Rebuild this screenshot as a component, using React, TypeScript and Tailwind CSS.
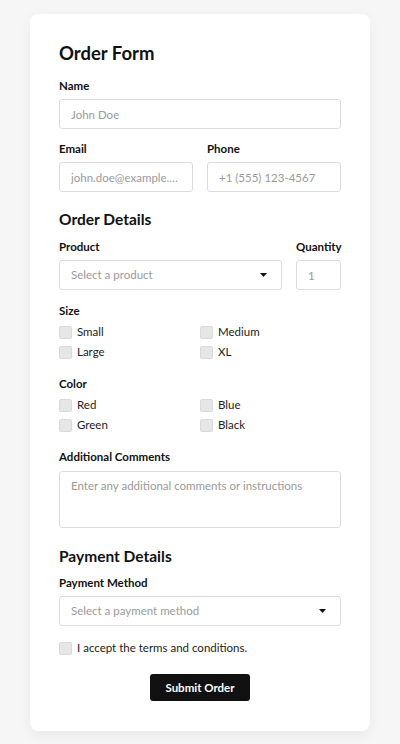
import React from "react";

const font = { fontFamily: 'Lato, "Noto Sans", sans-serif' };

function Label({ children, className = "" }: { children: React.ReactNode; className?: string }) {
    return <div className={`text-[11.5px] leading-4 font-bold text-[#111] ${className}`}>{children}</div>;
}

function TextInput({ placeholder }: { placeholder: string }) {
    return (
        <input
            placeholder={placeholder}
            className="block w-full h-[30px] px-[11px] rounded-[3px] border border-[#dcdcdc] bg-white text-[11.5px] text-[#333] placeholder:text-[#9a9a9a] text-ellipsis outline-none"
        />
    );
}

function SelectBox({ placeholder }: { placeholder: string }) {
    return (
        <div className="flex items-center justify-between h-[30px] pl-[11px] pr-[14px] rounded-[3px] border border-[#dcdcdc] bg-white">
            <span className="text-[11.5px] text-[#9a9a9a]">{placeholder}</span>
            <svg width="7" height="4" viewBox="0 0 7 4">
                <path d="M0 0h7L3.5 4z" fill="#111" />
            </svg>
        </div>
    );
}

function Check({ label }: { label: string }) {
    return (
        <label className="flex items-center h-5 gap-[5px] text-[11.5px] text-[#222]">
            <span className="w-[13px] h-[13px] rounded-[2px] bg-[#e6e6e6] border border-[#dadada]" />
            {label}
        </label>
    );
}

export default function App() {
    return (
        <div className="min-h-[744px] bg-[#f6f6f6] px-[30px] pt-[14px] pb-[14px]" style={font}>
            <div className="bg-white rounded-lg shadow-[0_4px_14px_rgba(0,0,0,0.06)] px-[29px] pt-[27px] pb-[30px]">
                <h1 className="text-[18.5px] leading-6 font-bold text-[#111]">Order Form</h1>

                <Label className="mt-[13px] mb-[5px]">Name</Label>
                <TextInput placeholder="John Doe" />

                <div className="grid grid-cols-2 gap-[14px] mt-3">
                    <div>
                        <Label className="mb-[5px]">Email</Label>
                        <TextInput placeholder="john.doe@example.com" />
                    </div>
                    <div>
                        <Label className="mb-[5px]">Phone</Label>
                        <TextInput placeholder="+1 (555) 123-4567" />
                    </div>
                </div>

                <h2 className="mt-4 text-[15.5px] leading-[22px] font-bold text-[#111]">Order Details</h2>

                <div className="flex gap-[14px] mt-[9px]">
                    <div className="flex-1">
                        <Label className="mb-[5px]">Product</Label>
                        <SelectBox placeholder="Select a product" />
                    </div>
                    <div className="w-[45px]">
                        <Label className="mb-[5px]">Quantity</Label>
                        <input
                            placeholder="1"
                            className="block w-full h-[30px] px-[11px] rounded-[3px] border border-[#dcdcdc] text-[11.5px] placeholder:text-[#9a9a9a] outline-none"
                        />
                    </div>
                </div>

                <Label className="mt-[13px]">Size</Label>
                <div className="grid grid-cols-2 mt-[3px]">
                    <Check label="Small" />
                    <Check label="Medium" />
                    <Check label="Large" />
                    <Check label="XL" />
                </div>

                <Label className="mt-[14px]">Color</Label>
                <div className="grid grid-cols-2 mt-[3px]">
                    <Check label="Red" />
                    <Check label="Blue" />
                    <Check label="Green" />
                    <Check label="Black" />
                </div>

                <Label className="mt-[14px] mb-[6px]">Additional Comments</Label>
                <textarea
                    placeholder="Enter any additional comments or instructions"
                    className="block w-full h-[57px] px-[11px] pt-[5px] pb-2 rounded-[3px] border border-[#dcdcdc] text-[11.5px] placeholder:text-[#9a9a9a] resize-none outline-none"
                />

                <h2 className="mt-[17px] text-[15.5px] leading-[22px] font-bold text-[#111]">Payment Details</h2>

                <Label className="mt-2 mb-[5px]">Payment Method</Label>
                <SelectBox placeholder="Select a payment method" />

                <div className="mt-3">
                    <Check label="I accept the terms and conditions." />
                </div>

                <div className="flex justify-center mt-4">
                    <button className="w-[100px] h-[27px] rounded-[3px] bg-[#111] text-white text-[11.5px] font-bold">
                        Submit Order
                    </button>
                </div>
            </div>
        </div>
    );
}
